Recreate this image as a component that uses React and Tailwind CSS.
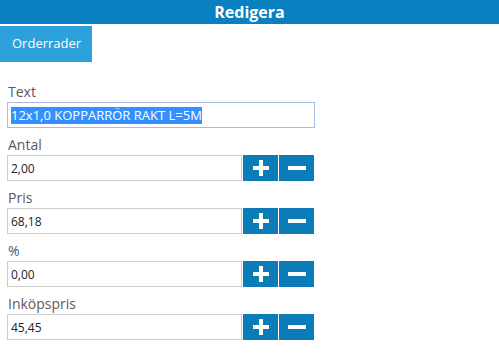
import { useState } from "react";

const font = { fontFamily: '"Open Sans", "Noto Sans", sans-serif' };

const PlusIcon = () => (
  <svg width="16" height="16" viewBox="0 0 16 16">
    <rect x="0" y="6" width="16" height="4" fill="white" />
    <rect x="6" y="0" width="4" height="16" fill="white" />
  </svg>
);

const MinusIcon = () => (
  <svg width="18" height="4" viewBox="0 0 18 4">
    <rect x="0" y="0" width="18" height="4" fill="white" />
  </svg>
);

const NumberRow = ({ label, value }) => {
  const [val, setVal] = useState(value);

  return (
    <div className="mb-[7px]">
      <div className="h-[20px] pl-[1px] text-[14px] leading-[20px] text-[#5a5a5a]">
        {label}
      </div>
      <div className="flex gap-[1px]">
        <input
          value={val}
          onChange={(e) => setVal(e.target.value)}
          className="h-[26px] w-[235px] border border-[#ccc] bg-white px-[3px] text-[12px] text-[#222] outline-none"
          style={font}
        />
        <button className="flex h-[26px] w-[35px] items-center justify-center bg-[#0b7cb8]">
          <PlusIcon />
        </button>
        <button className="flex h-[26px] w-[35px] items-center justify-center bg-[#0b7cb8]">
          <MinusIcon />
        </button>
      </div>
    </div>
  );
};

const App = () => {
  return (
    <div className="h-[357px] w-[499px] bg-white" style={font}>
      <div className="flex h-[24px] items-center justify-center bg-[#0980bf] text-[16px] font-bold text-white">
        Redigera
      </div>
      <div className="mt-[2px] flex h-[36px] w-[92px] items-center pl-[12px] text-[13px] text-white bg-[#2ba0da]">
        Orderrader
      </div>
      <div className="px-[7px] pt-[20px]">
        <div className="mb-[7px]">
          <div className="h-[20px] pl-[1px] text-[14px] leading-[20px] text-[#5a5a5a]">
            Text
          </div>
          <div className="flex h-[26px] w-[308px] items-center border border-[#a4bbe4] bg-white px-[3px] text-[13px]">
            <span className="bg-[#3390ff] leading-[17px] text-white">
              12x1,0 KOPPARRÖR RAKT L=5M
            </span>
          </div>
        </div>
        <NumberRow label="Antal" value="2,00" />
        <NumberRow label="Pris" value="68,18" />
        <NumberRow label="%" value="0,00" />
        <NumberRow label="Inköpspris" value="45,45" />
      </div>
    </div>
  );
};

export default App;
